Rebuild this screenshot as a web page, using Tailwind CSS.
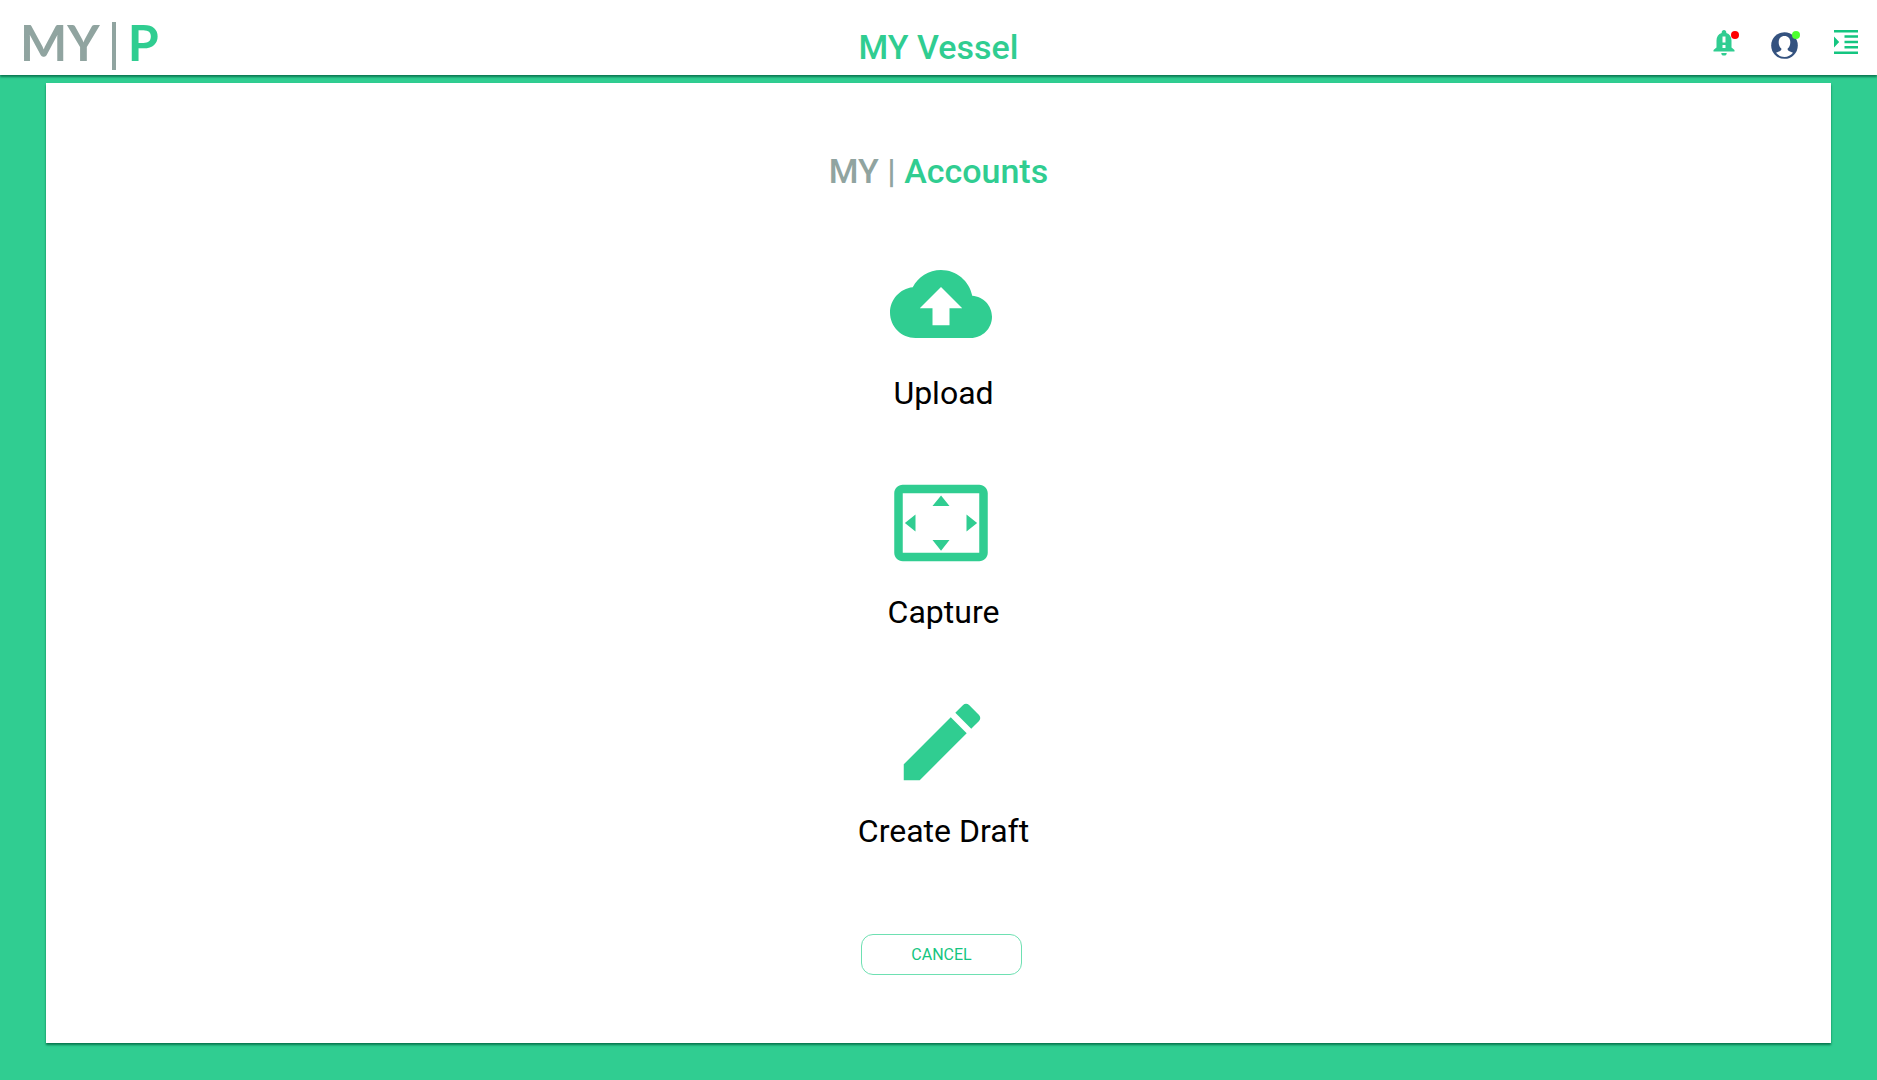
<!DOCTYPE html>
<html lang="en">
<head>
    <meta charset="UTF-8">
    <meta name="viewport" content="width=device-width, initial-scale=1.0">
    <title>MY Vessel - Accounts</title>
    <script src="https://cdn.jsdelivr.net/npm/@tailwindcss/browser@4"></script>
</head>
<body class="flex flex-col min-h-screen bg-[#30cd91] font-[Roboto,sans-serif]">

    <!-- Header -->
    <header class="grid grid-cols-3 items-center h-[75px] px-5 bg-white shadow-[0_2px_2px_#0b7a52]">
        <a href="#" class="flex items-start mt-3 gap-3 font-[Lato,sans-serif] text-[50px] leading-12 font-bold text-[#90a4a0]">
            <span>MY</span>
            <span class="w-1 h-12 mt-1 bg-[#90a4a0]"></span>
            <span class="text-[#30cd91]">P</span>
        </a>
        <h1 class="mt-[18px] text-center text-[34px] leading-10 font-medium text-[#30cd91]">MY Vessel</h1>
        <nav class="flex items-start justify-end mt-3.5 -mr-px">
            <!-- Notifications -->
            <button type="button" aria-label="Notifications" class="relative mr-[34px]">
                <svg class="w-[26px] h-[26px]" viewBox="0 0 26 26" fill="#30cd91">
                    <path fill-rule="evenodd" d="M13 0c1.400 0 2.300 1 2.300 2.300v.7c3.400 1 5.200 4 5.200 7.500v7L23.500 20v1.500H2.500V20l3-2.500v-7C5.500 7 7.300 4 10.700 3v-.7C10.700 1 11.600 0 13 0zM11.500 6.500v6h3v-6zM11.500 15v3h3v-3z"/>
                    <path d="M10.300 23h5.400a2.700 2.600 0 0 1-5.400 0z"/>
                </svg>
                <span class="absolute top-px -right-0.5 size-2 rounded-full bg-[#ff0000]"></span>
            </button>
            <!-- Profile -->
            <button type="button" aria-label="Profile" class="relative mt-0.5 mr-9">
                <svg class="w-[27px] h-[27px]" viewBox="0 0 27 27">
                    <circle cx="13.500" cy="13.500" r="13.300" fill="#34527f"/>
                    <path fill="#fff" d="M13.500 4c3.600 0 5.800 2.500 5.800 6.200 0 2.800-1 5-2.600 6.400-.3 1.400.2 2 1.700 2.600l3.600 1.600c-2.200 2.700-5.200 4.200-8.500 4.200s-6.300-1.500-8.500-4.200l3.600-1.600c1.500-.6 2-1.200 1.700-2.600-1.600-1.400-2.600-3.600-2.600-6.400C7.700 6.500 9.900 4 13.500 4z"/>
                </svg>
                <span class="absolute -top-px -right-0.5 size-2 rounded-full bg-[#4dff30]"></span>
            </button>
            <!-- Menu -->
            <button type="button" aria-label="Menu">
                <svg class="w-6 h-6" viewBox="0 0 24 24" fill="#14c580">
                    <path d="M0 0h24v2.500H0zM10.500 5.300H24v2.500H10.500zM10.500 10.700H24v2.500H10.500zM10.500 16H24v2.500H10.500zM0 21.500h24V24H0zM0 6.500v11l5.200-5.500z"/>
                </svg>
            </button>
        </nav>
    </header>

    <!-- Content card -->
    <main class="flex flex-col items-center mx-[46px] mt-2 mb-[37px] grow pt-[68px] bg-white shadow-[0_2px_2px_#08794f]">
        <h2 class="text-[34px] leading-10 font-medium text-[#30cd91]"><span class="text-[#90a4a0]">MY |</span> Accounts</h2>

        <div class="flex flex-col items-center gap-[56px] mt-[62px] pl-1.5">
            <button type="button" class="flex flex-col items-center">
                <svg class="w-[102px] h-[102px]" viewBox="0 0 24 24" fill="#30cd91">
                    <path d="M19.350 10.040C18.670 6.590 15.640 4 12 4 9.110 4 6.600 5.640 5.350 8.040 2.340 8.360 0 10.910 0 14c0 3.310 2.690 6 6 6h13c2.760 0 5-2.240 5-5 0-2.640-2.050-4.780-4.650-4.960zM14 13v4h-4v-4H7l5-5 5 5h-3z"/>
                </svg>
                <span class="mt-[15px] pl-1 text-[32px] leading-[46px] text-black">Upload</span>
            </button>
            <button type="button" class="flex flex-col items-center">
                <svg class="w-[102px] h-[102px]" viewBox="0 0 24 24" fill="#30cd91">
                    <path d="M12.010 5.500L10 8h4l-1.990-2.500zM18 10v4l2.500-1.990L18 10zM6 10l-2.500 2.010L6 14v-4zm8 6h-4l2.010 2.500L14 16zm7-13H3c-1.100 0-2 .9-2 2v14c0 1.100.9 2 2 2h18c1.100 0 2-.9 2-2V5c0-1.100-.9-2-2-2zm0 16.010H3V4.990h18v14.020z"/>
                </svg>
                <span class="mt-[15px] pl-1 text-[32px] leading-[46px] text-black">Capture</span>
            </button>
            <button type="button" class="flex flex-col items-center">
                <svg class="w-[102px] h-[102px]" viewBox="0 0 24 24" fill="#30cd91">
                    <path d="M3 17.250V21h3.750L17.810 9.940l-3.750-3.750L3 17.250zM20.710 7.040c.39-.39.39-1.020 0-1.410l-2.340-2.340c-.39-.39-1.020-.39-1.410 0l-1.830 1.830 3.750 3.750 1.830-1.830z"/>
                </svg>
                <span class="mt-[15px] pl-1 text-[32px] leading-[46px] text-black">Create Draft</span>
            </button>
            <button type="button" class="w-[161px] h-[41px] mt-6 rounded-xl border border-[#6ee0b2] text-base text-[#14c580]">CANCEL</button>
        </div>
    </main>

</body>
</html>
